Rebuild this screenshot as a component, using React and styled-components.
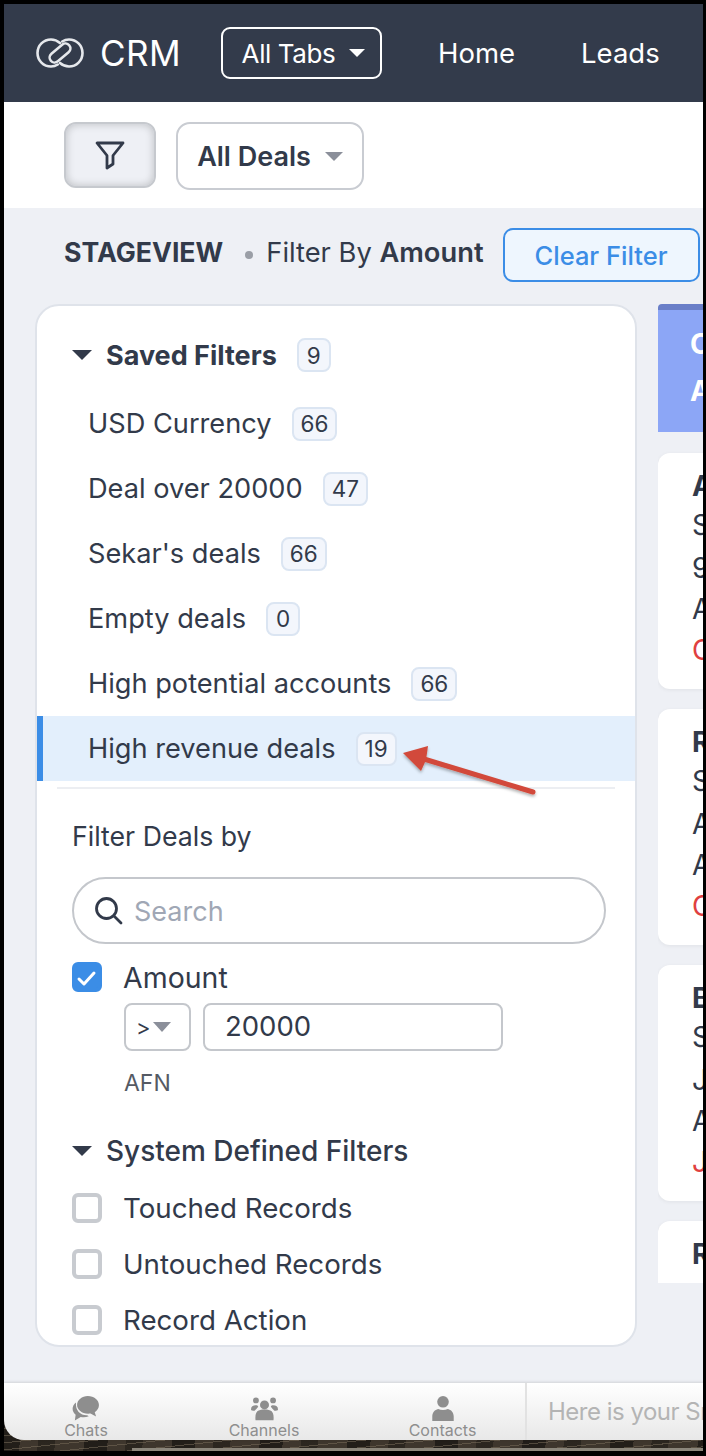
import React from "react";
import styled, { createGlobalStyle } from "styled-components";

const savedFilters = [
  { name: "USD Currency", count: 66 },
  { name: "Deal over 20000", count: 47 },
  { name: "Sekar's deals", count: 66 },
  { name: "Empty deals", count: 0 },
  { name: "High potential accounts", count: 66 },
  { name: "High revenue deals", count: 19, active: true },
];

const cards = [
  ["A", "S", "9", "A", "O"],
  ["R", "S", "A", "A", "O"],
  ["B", "S", "J", "A", "J"],
  ["R"],
];

const LogoIcon = () => (
  <svg width="48" height="30" viewBox="0 0 48 30" fill="none" stroke="#e6e8ec" strokeWidth="2.6" strokeLinecap="round">
    <path d="M24 5C21.500 2.800 18.500 1.500 15 1.500 7.500 1.500 1.500 7.500 1.500 15s6 13.500 13.500 13.500c2.500 0 4.800-.7 6.800-2" />
    <path d="M24 25c2.500 2.200 5.500 3.500 9 3.500 7.500 0 13.500-6 13.500-13.500S40.500 1.500 33 1.500c-2.500 0-4.800.7-6.800 2" />
    <rect x="12" y="10" width="24" height="10" rx="5" transform="rotate(-40 24 15)" />
  </svg>
);

const FunnelIcon = () => (
  <svg width="32" height="32" viewBox="0 0 32 32" fill="none" stroke="#323a4a" strokeWidth="2.800" strokeLinejoin="round">
    <path d="M3 4h26L19 16.500V25l-6 4V16.500z" />
  </svg>
);

const SearchIcon = () => (
  <svg width="29" height="29" viewBox="0 0 29 29" fill="none" stroke="#323a4a" strokeWidth="2.800" strokeLinecap="round">
    <circle cx="12.500" cy="12.500" r="10" />
    <path d="M20 20l7 7" />
  </svg>
);

const CheckIcon = () => (
  <svg width="22" height="22" viewBox="0 0 22 22" fill="none" stroke="#fff" strokeWidth="3" strokeLinecap="round" strokeLinejoin="round">
    <path d="M3 13l5 5 10-11" />
  </svg>
);

const ChatsIcon = () => (
  <svg width="28" height="25" viewBox="0 0 30 28" fill="#8e8e8e">
    <path d="M17 0c7 0 12.500 4.500 12.500 10.200 0 3.300-1.800 6.200-4.700 8.100l1.500 4.700-6.300-3.300c-.8.100-1.600.2-2.500.2C10.500 20 5 15.600 5 10.200 5 4.500 10.500 0 17 0z" />
    <path d="M3.800 7.300C1.500 9 0 11.500 0 14.300c0 2.700 1.300 5 3.400 6.700L2.500 27.500l6.600-4.100c3 .8 6.300.4 9-.8l-1.800-1c-7 .4-13.500-5-12.500-14.300z" />
  </svg>
);

const ChannelsIcon = () => (
  <svg width="27" height="25" viewBox="0 0 30 26" fill="#8e8e8e">
    <circle cx="15" cy="9" r="5" />
    <circle cx="5.500" cy="4" r="3.200" />
    <circle cx="24.500" cy="4" r="3.200" />
    <path d="M5 26c-.4-4 0-8 2-10 2-1.500 4-2 8-2s6 .5 8 2c2 2 2.400 6 2 10z" />
    <path d="M0 14c0-3 2-4.500 5.500-4.500 1.300 0 2 .5 2.500 1.500-1 1.500-2.500 3-4 4.500-2 0-4-.3-4-1.500z" />
    <path d="M30 14c0-3-2-4.500-5.500-4.500-1.300 0-2 .5-2.500 1.500 1 1.500 2.500 3 4 4.500 2 0 4-.3 4-1.500z" />
  </svg>
);

const ContactsIcon = () => (
  <svg width="22" height="25" viewBox="0 0 24 28" fill="#8e8e8e">
    <circle cx="12" cy="6.500" r="6.500" />
    <path d="M0 28v-5c0-5 3-7.500 6.500-8.500 3.500 1.500 7.500 1.500 11 0 3.500 1 6.500 3.500 6.500 8.500v5z" />
  </svg>
);

const App = () => (
  <>
    <GlobalStyle />
    <Frame>
      <TopBar>
        <Logo>
          <LogoIcon />
          <LogoName>CRM</LogoName>
        </Logo>
        <TabsButton>
          All Tabs
          <Caret $color="#fff" $size={8} />
        </TabsButton>
        <NavLinks>
          <NavLink>Home</NavLink>
          <NavLink>Leads</NavLink>
        </NavLinks>
      </TopBar>

      <Toolbar>
        <FilterToggle>
          <FunnelIcon />
        </FilterToggle>
        <ViewSelect>
          All Deals
          <Caret $color="#8b8f9a" $size={9} />
        </ViewSelect>
      </Toolbar>

      <Body>
        <Summary>
          <ViewName>STAGEVIEW</ViewName>
          <Dot />
          <FilterText>
            Filter By <strong>Amount</strong>
          </FilterText>
          <ClearButton>Clear Filter</ClearButton>
        </Summary>

        <Columns>
          <Panel>
            <SavedHead>
              <Caret $color="#323a4a" $size={10} />
              <SavedTitle>Saved Filters</SavedTitle>
              <Count>9</Count>
            </SavedHead>
            <SavedList>
              {savedFilters.map((item) => (
                <SavedRow key={item.name} $active={item.active}>
                  {item.name}
                  <Count>{item.count}</Count>
                </SavedRow>
              ))}
              <Arrow width="150" height="64" viewBox="0 0 150 64">
                <defs>
                  <filter id="arrow-shadow" x="-10%" y="-20%" width="120%" height="150%">
                    <feDropShadow dx="0" dy="2" stdDeviation="1.500" floodColor="#000" floodOpacity="0.3" />
                  </filter>
                </defs>
                <g filter="url(#arrow-shadow)" fill="#d24a3a">
                  <path d="M139 56 30 23" stroke="#d24a3a" strokeWidth="5" strokeLinecap="round" />
                  <path d="M9 17 34 10 32 24 27 35z" />
                </g>
              </Arrow>
            </SavedList>
            <Divider />
            <FilterBy>Filter Deals by</FilterBy>
            <SearchBox>
              <SearchIcon />
              <SearchHint>Search</SearchHint>
            </SearchBox>
            <AmountRow>
              <CheckBox $checked>
                <CheckIcon />
              </CheckBox>
              Amount
            </AmountRow>
            <AmountInputs>
              <Operator>
                &gt;
                <SmallCaret />
              </Operator>
              <AmountValue>20000</AmountValue>
            </AmountInputs>
            <Currency>AFN</Currency>
            <SystemHead>
              <Caret $color="#323a4a" $size={10} />
              System Defined Filters
            </SystemHead>
            <SystemList>
              {["Touched Records", "Untouched Records", "Record Action"].map((label) => (
                <SystemRow key={label}>
                  <CheckBox />
                  {label}
                </SystemRow>
              ))}
            </SystemList>
          </Panel>

          <Stage>
            <StageHead>
              <span>C</span>
              <span>A</span>
            </StageHead>
            {cards.map((lines, i) => (
              <DealCard key={i}>
                {lines.map((line, j) => (
                  <DealLine key={j} $bold={j === 0} $red={j === 4}>
                    {line}
                  </DealLine>
                ))}
              </DealCard>
            ))}
          </Stage>
        </Columns>
      </Body>

      <Desk>
        <BottomBar>
          <DockTabs>
            <DockTab>
              <ChatsIcon />
              Chats
            </DockTab>
            <DockTab>
              <ChannelsIcon />
              Channels
            </DockTab>
            <DockTab>
              <ContactsIcon />
              Contacts
            </DockTab>
          </DockTabs>
          <SmartHint>Here is your Smart Chat</SmartHint>
        </BottomBar>
        <Ledge />
      </Desk>
    </Frame>
  </>
);

export default App;

const GlobalStyle = createGlobalStyle`
  html, body {
    margin: 0;
    background: #000;
  }
  * {
    box-sizing: border-box;
  }
`;

const Frame = styled.div`
  width: 699px;
  height: 1447px;
  margin: 4px 0 0 4px;
  overflow: hidden;
  font-family: Inter, "Liberation Sans", sans-serif;
  color: #323a4a;
`;

const TopBar = styled.header`
  height: 98px;
  display: flex;
  align-items: center;
  padding-left: 32px;
  background: #333b4b;
  color: #fff;
`;

const Logo = styled.div`
  display: flex;
  align-items: center;
  gap: 16px;
  width: 185px;
`;

const LogoName = styled.span`
  font-size: 35px;
  letter-spacing: 0.5px;
`;

const TabsButton = styled.div`
  width: 161px;
  height: 52px;
  padding-left: 4px;
  display: flex;
  align-items: center;
  justify-content: center;
  gap: 14px;
  border: 2px solid #fff;
  border-radius: 9px;
  font-size: 26px;
  letter-spacing: -0.4px;
`;

const Caret = styled.span`
  flex: none;
  width: 0;
  height: 0;
  border-left: ${(p) => p.$size}px solid transparent;
  border-right: ${(p) => p.$size}px solid transparent;
  border-top: ${(p) => p.$size}px solid ${(p) => p.$color};
`;

const NavLinks = styled.nav`
  display: flex;
  gap: 66px;
  margin-left: 56px;
`;

const NavLink = styled.span`
  font-size: 27.5px;
`;

const Toolbar = styled.div`
  height: 106px;
  display: flex;
  align-items: center;
  gap: 20px;
  padding-left: 60px;
  background: #fff;
`;

const FilterToggle = styled.div`
  width: 92px;
  height: 66px;
  display: flex;
  align-items: center;
  justify-content: center;
  border: 2px solid #c6c9ce;
  border-radius: 12px;
  background: #eef0f5;
  box-shadow: inset 0 0 8px rgba(0, 0, 0, 0.22);
`;

const ViewSelect = styled.div`
  width: 188px;
  height: 68px;
  margin-top: 2px;
  display: flex;
  align-items: center;
  justify-content: center;
  gap: 14px;
  border: 2px solid #c9ccd2;
  border-radius: 14px;
  font-size: 27px;
  font-weight: 600;
`;

const Body = styled.div`
  height: 1175px;
  padding-top: 20px;
  background: #eef0f5;
`;

const Summary = styled.div`
  height: 54px;
  display: flex;
  align-items: center;
  padding-left: 60px;
`;

const ViewName = styled.span`
  margin-bottom: 6px;
  font-size: 26.7px;
  font-weight: 700;
`;

const Dot = styled.span`
  flex: none;
  width: 8px;
  height: 8px;
  margin: 0 13px 0 22px;
  border-radius: 50%;
  background: #9a9ea6;
`;

const FilterText = styled.span`
  margin-bottom: 6px;
  font-size: 27.3px;
  white-space: nowrap;
  strong {
    font-weight: 600;
  }
`;

const ClearButton = styled.div`
  width: 197px;
  height: 54px;
  margin-left: 19px;
  flex: none;
  display: flex;
  align-items: center;
  justify-content: center;
  border: 2px solid #3b8de6;
  border-radius: 10px;
  background: #eef6fe;
  color: #3b8de6;
  font-size: 25.5px;
  font-weight: 500;
`;

const Columns = styled.div`
  display: flex;
  gap: 21px;
  margin-top: 22px;
  padding-left: 31px;
`;

const Panel = styled.aside`
  flex: none;
  width: 602px;
  height: 1043px;
  padding-top: 32px;
  overflow: hidden;
  border: 2px solid #dfe3ea;
  border-radius: 24px;
  background: #fff;
`;

const SavedHead = styled.div`
  height: 34px;
  display: flex;
  align-items: center;
  padding-left: 35px;
`;

const SavedTitle = styled.span`
  margin-left: 14px;
  font-size: 27px;
  font-weight: 700;
`;

const Count = styled.span`
  min-width: 34px;
  height: 34px;
  margin-left: 20px;
  padding: 0 7px;
  display: flex;
  align-items: center;
  justify-content: center;
  border: 2px solid #dbe5f2;
  border-radius: 8px;
  background: #f3f6fc;
  font-size: 22.5px;
`;

const SavedList = styled.div`
  position: relative;
  margin-top: 19px;
`;

const SavedRow = styled.div`
  height: 65px;
  display: flex;
  align-items: center;
  padding-left: 45px;
  font-size: 27.2px;
  background: ${(p) => (p.$active ? "#e3effc" : "transparent")};
  border-left: 6px solid ${(p) => (p.$active ? "#3b8de6" : "transparent")};
`;

const Arrow = styled.svg`
  position: absolute;
  left: 357px;
  bottom: -19px;
`;

const Divider = styled.div`
  height: 2px;
  margin: 6px 20px 0;
  background: #eceef2;
`;

const FilterBy = styled.div`
  margin: 30px 0 0 35px;
  font-size: 26.7px;
  line-height: 34px;
`;

const SearchBox = styled.div`
  width: 534px;
  height: 67px;
  margin: 24px 0 0 35px;
  padding-left: 20px;
  display: flex;
  align-items: center;
  gap: 11px;
  border: 2px solid #c4c7cc;
  border-radius: 34px;
`;

const SearchHint = styled.span`
  padding-top: 2px;
  color: #a0a7b5;
  font-size: 27px;
`;

const AmountRow = styled.div`
  height: 30px;
  margin: 18px 0 0 35px;
  display: flex;
  align-items: center;
  gap: 21px;
  font-size: 28.5px;
`;

const CheckBox = styled.span`
  flex: none;
  width: 30px;
  height: 30px;
  display: flex;
  align-items: flex-end;
  justify-content: center;
  border-radius: 6px;
  border: 4px solid ${(p) => (p.$checked ? "#3b8de6" : "#c8cbd0")};
  background: ${(p) => (p.$checked ? "#3b8de6" : "#fff")};
`;

const AmountInputs = styled.div`
  display: flex;
  gap: 12px;
  margin: 11px 0 0 87px;
`;

const Operator = styled.div`
  width: 67px;
  height: 48px;
  display: flex;
  align-items: center;
  gap: 2px;
  padding-left: 10px;
  border: 2px solid #c4c7cc;
  border-radius: 8px;
  font-size: 22px;
`;

const SmallCaret = styled.span`
  width: 0;
  height: 0;
  border-left: 9px solid transparent;
  border-right: 9px solid transparent;
  border-top: 10px solid #8b8f9a;
`;

const AmountValue = styled.div`
  width: 300px;
  height: 48px;
  padding: 0 0 3px 20px;
  display: flex;
  align-items: center;
  border: 2px solid #c4c7cc;
  border-radius: 8px;
  font-size: 27.5px;
`;

const Currency = styled.div`
  margin: 18px 0 0 87px;
  color: #555a64;
  font-size: 23px;
  line-height: 28px;
`;

const SystemHead = styled.div`
  height: 34px;
  margin: 37px 0 0 35px;
  display: flex;
  align-items: center;
  gap: 14px;
  font-size: 28px;
  font-weight: 500;
`;

const SystemList = styled.div`
  display: flex;
  flex-direction: column;
  gap: 26px;
  margin: 25px 0 0 35px;
`;

const SystemRow = styled.div`
  height: 30px;
  display: flex;
  align-items: center;
  gap: 21px;
  font-size: 27.7px;
`;

const Stage = styled.section`
  flex: none;
  width: 300px;
  height: 979px;
  display: flex;
  flex-direction: column;
  gap: 20px;
  overflow: hidden;
`;

const StageHead = styled.div`
  flex: none;
  height: 128px;
  margin-bottom: 1px;
  padding: 16px 0 0 32px;
  display: flex;
  flex-direction: column;
  gap: 11px;
  border-top: 6px solid #6a7fc8;
  border-radius: 4px 0 0 0;
  background: #8ca6f6;
  color: #fff;
  font-size: 28px;
  font-weight: 700;
  line-height: 36px;
`;

const DealCard = styled.article`
  flex: none;
  height: 236px;
  padding: 13px 0 0 34px;
  border-radius: 12px;
  background: #fff;
  box-shadow: 0 1px 4px rgba(0, 0, 0, 0.06);
`;

const DealLine = styled.div`
  font-size: 28px;
  line-height: 41px;
  font-weight: ${(p) => (p.$bold ? 700 : 400)};
  color: ${(p) => (p.$red ? "#e04040" : "#323a4a")};
  &:nth-child(2) {
    margin: -2px 0 2px;
  }
`;

const Desk = styled.div`
  height: 68px;
  background:
    repeating-linear-gradient(174deg, transparent 0 3px, rgba(120, 108, 90, 0.55) 3px 4px, transparent 4px 7px),
    repeating-linear-gradient(97deg, rgba(0, 0, 0, 0.45) 0 23px, transparent 23px 41px, rgba(0, 0, 0, 0.3) 41px 58px, transparent 58px 87px),
    #3e362d;
`;

const BottomBar = styled.footer`
  height: 57px;
  display: flex;
  border-bottom-left-radius: 20px;
  overflow: hidden;
  background: linear-gradient(180deg, #fff 0%, #e8e8e8 100%);
  box-shadow: 0 -1px 3px rgba(0, 0, 0, 0.12);
`;

const DockTabs = styled.div`
  flex: none;
  width: 523px;
  display: grid;
  grid-template-columns: 164px 192px 165px;
  border-right: 2px solid #e2e2e2;
`;

const DockTab = styled.div`
  display: flex;
  flex-direction: column;
  align-items: center;
  justify-content: flex-end;
  color: #8e8e8e;
  font-size: 16px;
  line-height: 19px;
`;

const SmartHint = styled.div`
  padding-left: 21px;
  display: flex;
  align-items: center;
  white-space: nowrap;
  color: #b4b4b4;
  font-size: 24px;
  letter-spacing: -0.5px;
`;

const Ledge = styled.div`
  height: 3px;
  margin: 8px 0 0 128px;
  background: #8b867b;
`;
